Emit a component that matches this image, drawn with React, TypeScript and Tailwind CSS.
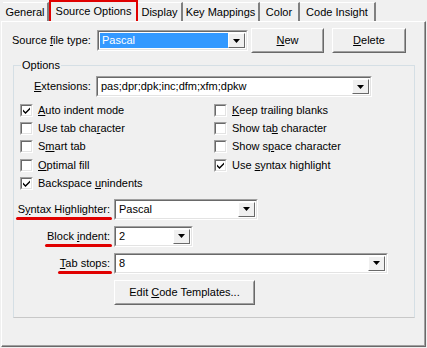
import type { ReactNode } from "react";

const tabs = [
  { label: "General", w: "w-[46px]" },
  { label: "Source Options", w: "w-[89px]", active: true },
  { label: "Display", w: "w-[45px]" },
  { label: "Key Mappings", w: "w-[77px]" },
  { label: "Color", w: "w-[40px]" },
  { label: "Code Insight", w: "w-[76px]" },
];

function Arrow() {
  return (
    <div className="w-[17px] self-stretch flex items-center justify-center bg-[#f0f0f0] border border-t-white border-l-white border-r-[#696969] border-b-[#696969]">
      <svg width="7" height="4" viewBox="0 0 7 4">
        <path d="M0 0h7L3.5 4z" fill="#000" />
      </svg>
    </div>
  );
}

function Combo({ value, w, selected }: { value: string; w: string; selected?: boolean }) {
  return (
    <div className={`${w} h-[21px] flex bg-white border border-t-[#a0a0a0] border-l-[#a0a0a0] border-r-white border-b-white`}>
      <div className="flex-1 flex border border-t-[#696969] border-l-[#696969] border-r-[#e3e3e3] border-b-[#e3e3e3] p-[1px]">
        <div
          className={`flex-1 flex items-center pl-[2px] ${selected ? "bg-[#3399ff] text-white" : ""}`}
        >
          {value}
        </div>
        <Arrow />
      </div>
    </div>
  );
}

function Button({ children, w }: { children: ReactNode; w: string }) {
  return (
    <div className={`${w} h-[25px] flex border border-t-white border-l-white border-r-[#696969] border-b-[#696969]`}>
      <div className="flex-1 flex items-center justify-center border border-t-[#f0f0f0] border-l-[#f0f0f0] border-r-[#a0a0a0] border-b-[#a0a0a0]">
        {children}
      </div>
    </div>
  );
}

function Check({ checked, children }: { checked?: boolean; children: ReactNode }) {
  return (
    <div className="h-[18.4px] flex items-center gap-[5px]">
      <div className="w-[13px] h-[13px] bg-white border border-t-[#a0a0a0] border-l-[#a0a0a0] border-r-white border-b-white">
        <div className="w-full h-full border border-t-[#696969] border-l-[#696969] border-r-[#e3e3e3] border-b-[#e3e3e3] flex items-center justify-center">
          {checked && (
            <svg width="7" height="7" viewBox="0 0 7 7">
              <path d="M0 2.5l2.5 2.5L7 0.5v2L2.5 7 0 4.5z" fill="#000" />
            </svg>
          )}
        </div>
      </div>
      <span>{children}</span>
    </div>
  );
}

function Marked({ children }: { children: ReactNode }) {
  return (
    <span className="relative whitespace-nowrap">
      {children}
      <span className="absolute left-[-2px] right-[-2px] top-[13px] h-[3px] rounded-full bg-[#e00000]" />
    </span>
  );
}

function Label({ children }: { children: ReactNode }) {
  return (
    <div className="flex justify-end pr-[4px] whitespace-nowrap">
      <Marked>{children}</Marked>
    </div>
  );
}

export default function App() {
  return (
    <div
      className="w-[427px] h-[348px] bg-[#f0f0f0] text-black text-[11px] leading-none overflow-hidden"
      style={{ fontFamily: '"Liberation Sans", Arial, sans-serif' }}
    >
      {/* Tabs */}
      <div className="flex items-end h-[21px] pl-[3px]">
        {tabs.map((t) =>
          t.active ? (
            <div
              key={t.label}
              className={`${t.w} h-[21px] flex items-center justify-center border-2 border-b-0 border-[#e00000] bg-[#f0f0f0]`}
            >
              {t.label}
            </div>
          ) : (
            <div
              key={t.label}
              className={`${t.w} h-[19px] flex items-center justify-center border-r-2 border-r-[#808080] border-t border-t-white`}
            >
              {t.label}
            </div>
          )
        )}
      </div>

      {/* Page */}
      <div className="ml-[1px] w-[425px] h-[326px] border border-t-white border-l-white border-r-[#696969] border-b-[#696969]">
        <div className="h-full border-r border-b border-r-[#a0a0a0] border-b-[#a0a0a0] pl-[10px] pt-[6px]">
          <div className="flex items-center h-[25px]">
            <span className="w-[85px]">
              Source <u>f</u>ile type:
            </span>
            <Combo value="Pascal" w="w-[151px]" selected />
            <div className="ml-[3px]">
              <Button w="w-[73px]">
                <span>
                  <u>N</u>ew
                </span>
              </Button>
            </div>
            <div className="ml-[8px]">
              <Button w="w-[74px]">
                <span>
                  <u>D</u>elete
                </span>
              </Button>
            </div>
          </div>

          <fieldset className="mt-[5px] ml-[1px] w-[402px] h-[260px] border border-[#d5dfe5] border-b-[#c8c8c8] px-[6px] pb-0 pt-0">
            <legend className="ml-[1px] px-[1px] leading-[14px]">Options</legend>
            <div className="flex items-center h-[21px] mt-[4px]">
              <span className="w-[76px] pl-[14px] pr-[4px]">
                <u>E</u>xtensions:
              </span>
              <Combo value="pas;dpr;dpk;inc;dfm;xfm;dpkw" w="w-[276px]" />
            </div>

            <div className="grid grid-cols-[194px_1fr] mt-[4px]">
              <div className="flex flex-col">
                <Check checked>
                  <u>A</u>uto indent mode
                </Check>
                <Check>
                  Use tab cha<u>r</u>acter
                </Check>
                <Check>
                  S<u>m</u>art tab
                </Check>
                <Check>
                  <u>O</u>ptimal fill
                </Check>
                <Check checked>
                  Backspace <u>u</u>nindents
                </Check>
              </div>
              <div className="flex flex-col">
                <Check>
                  <u>K</u>eep trailing blanks
                </Check>
                <Check>
                  Show ta<u>b</u> character
                </Check>
                <Check>
                  Show s<u>p</u>ace character
                </Check>
                <Check checked>
                  Use <u>s</u>yntax highlight
                </Check>
              </div>
            </div>

            <div className="grid grid-cols-[94px_1fr] gap-y-[6px] items-center mt-[6px]">
              <Label>
                S<u>y</u>ntax Highlighter:
              </Label>
              <Combo value="Pascal" w="w-[144px]" />
              <Label>
                Block <u>i</u>ndent:
              </Label>
              <Combo value="2" w="w-[79px]" />
              <Label>
                <u>T</u>ab stops:
              </Label>
              <Combo value="8" w="w-[274px]" />
              <span />
              <Button w="w-[141px]">
                <span>
                  Edit <u>C</u>ode Templates...
                </span>
              </Button>
            </div>
          </fieldset>
        </div>
      </div>
    </div>
  );
}
